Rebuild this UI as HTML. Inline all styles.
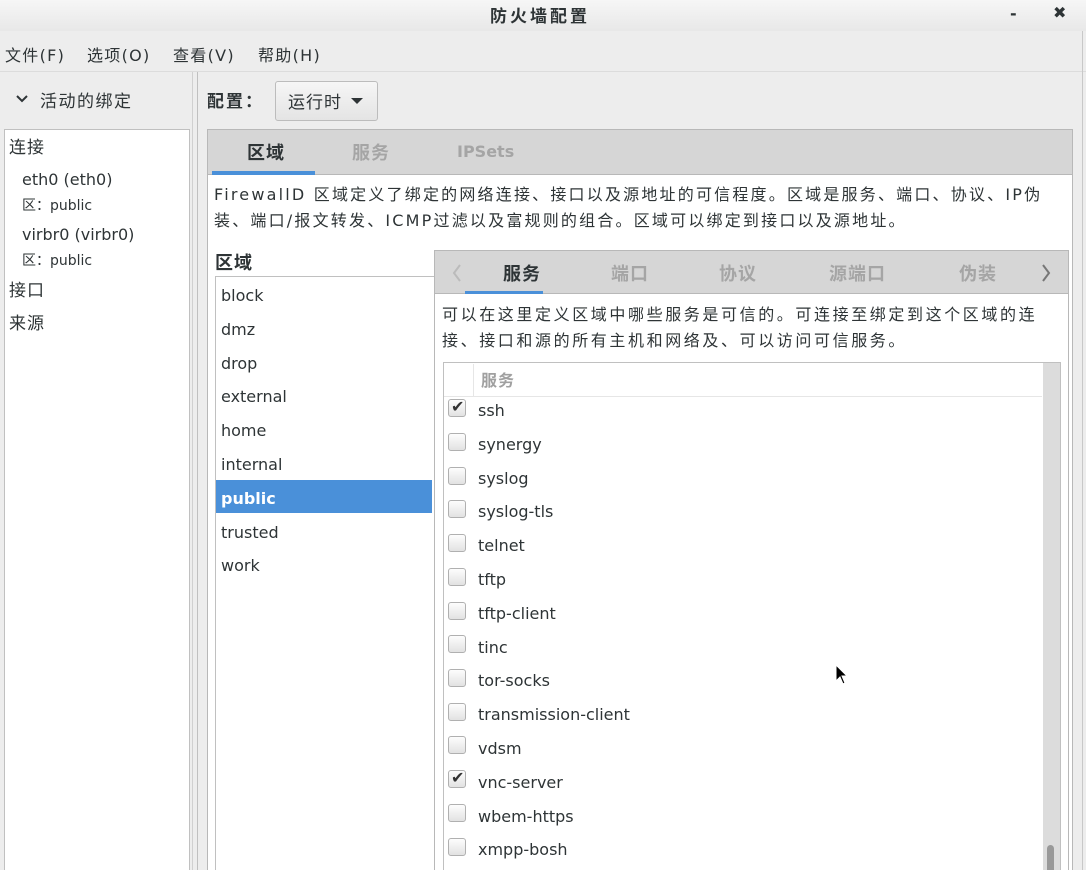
<!DOCTYPE html>
<html><head><meta charset="utf-8"><style>
*{box-sizing:border-box;margin:0;padding:0}
html,body{width:1086px;height:870px;overflow:hidden}
body{background:#ededed;font-family:"DejaVu Sans","Noto Sans CJK SC",sans-serif;font-size:16px;color:#2e3436;position:relative}
.a{position:absolute;white-space:nowrap}
.b{font-weight:bold}
.cb{position:absolute;left:448px;width:18px;height:18px;border:1px solid #b0b0b0;border-radius:3px;background:linear-gradient(#fdfdfd,#e2e2e2)}
.ck::after{content:"✔";position:absolute;left:2px;top:-3px;font-size:16px;color:#333}
</style></head><body>
<div class="a" style="left:0;top:0;width:1086px;height:31px;background:linear-gradient(#f6f6f6,#e8e8e8)"></div>
<div class="a b" style="left:490px;top:2px;font-size:17px;letter-spacing:3px">防火墙配置</div>
<div class="a b" style="left:1010px;top:4px;font-size:16px">-</div>
<div class="a b" style="left:1053px;top:3px;font-size:16px">✖</div>
<div class="a" style="left:5px;top:42px;font-size:16px;letter-spacing:1.3px">文件(F)</div>
<div class="a" style="left:87px;top:42px;font-size:16px;letter-spacing:1.3px">选项(O)</div>
<div class="a" style="left:173px;top:42px;font-size:16px;letter-spacing:1.3px">查看(V)</div>
<div class="a" style="left:258px;top:42px;font-size:16px;letter-spacing:1.3px">帮助(H)</div>
<div class="a" style="left:0;top:71px;width:1086px;height:1px;background:#dcdcdc"></div>
<svg class="a" style="left:15px;top:94px" width="14" height="10"><path d="M2 2 L7 7 L12 2" stroke="#2e3436" stroke-width="2" fill="none"/></svg>
<div class="a" style="left:40px;top:87px;font-size:17px;letter-spacing:1.5px">活动的绑定</div>
<div class="a" style="left:4px;top:129px;width:186px;height:745px;background:#fff;border:1px solid #c0c0c0"></div>
<div class="a" style="left:9px;top:133px;font-size:17px;letter-spacing:1px">连接</div>
<div class="a" style="left:22px;top:170px">eth0 (eth0)</div>
<div class="a" style="left:22px;top:195px;font-size:14px">区：public</div>
<div class="a" style="left:22px;top:225px">virbr0 (virbr0)</div>
<div class="a" style="left:22px;top:250px;font-size:14px">区：public</div>
<div class="a" style="left:9px;top:276px;font-size:17px;letter-spacing:1px">接口</div>
<div class="a" style="left:9px;top:309px;font-size:17px;letter-spacing:1px">来源</div>
<div class="a" style="left:192px;top:72px;width:1px;height:800px;background:#d0d0d0"></div>
<div class="a" style="left:197px;top:72px;width:1px;height:800px;background:#c0c0c0"></div>
<div class="a b" style="left:207px;top:87px;font-size:17px;letter-spacing:2px">配置：</div>
<div class="a" style="left:275px;top:81px;width:103px;height:40px;border:1px solid #bcbcbc;border-radius:3px;background:linear-gradient(#f6f6f6,#e4e4e4)"></div>
<div class="a" style="left:288px;top:88px;font-size:17px;letter-spacing:1px">运行时</div>
<svg class="a" style="left:350px;top:97px" width="14" height="8"><path d="M1 1 L13 1 L7 7 Z" fill="#2e3436"/></svg>
<div class="a" style="left:207px;top:129px;width:866px;height:745px;background:#fff;border:1px solid #b8b8b8"></div>
<div class="a" style="left:208px;top:130px;width:864px;height:45px;background:#d6d6d6;border-bottom:1px solid #b8b8b8"></div>
<div class="a" style="left:212px;top:171px;width:103px;height:4px;background:#4a90d9"></div>
<div class="a b" style="left:247px;top:139px;font-size:18px;letter-spacing:1px">区域</div>
<div class="a b" style="left:352px;top:139px;font-size:18px;color:#a5a5a5;letter-spacing:1px">服务</div>
<div class="a b" style="left:457px;top:142px;font-size:16px;color:#a5a5a5">IPSets</div>
<div class="a" style="left:214px;top:182px;font-size:16px;line-height:26px;letter-spacing:2.2px">FirewallD 区域定义了绑定的网络连接、接口以及源地址的可信程度。区域是服务、端口、协议、IP伪<br>装、端口/报文转发、ICMP过滤以及富规则的组合。区域可以绑定到接口以及源地址。</div>
<div class="a b" style="left:215px;top:249px;font-size:18px;letter-spacing:1px">区域</div>
<div class="a" style="left:215px;top:276px;width:220px;height:600px;background:#fff;border:1px solid #c0c0c0"></div>
<div class="a" style="left:216px;top:480px;width:216px;height:33px;background:#4a90d9"></div>
<div class="a" style="left:221px;top:279px;line-height:33.8px;font-size:16px">block<br>dmz<br>drop<br>external<br>home<br>internal<br><span style="color:#fff;font-weight:bold">public</span><br>trusted<br>work</div>
<div class="a" style="left:434px;top:250px;width:635px;height:625px;background:#fff;border:1px solid #b8b8b8"></div>
<div class="a" style="left:435px;top:251px;width:633px;height:43px;background:#d6d6d6;border-bottom:1px solid #b8b8b8"></div>
<div class="a" style="left:465px;top:291px;width:78px;height:3px;background:#4a90d9"></div>
<svg class="a" style="left:451px;top:263px" width="12" height="20"><path d="M9 2 L3 10 L9 18" stroke="#bbb" stroke-width="2" fill="none"/></svg>
<svg class="a" style="left:1040px;top:263px" width="12" height="20"><path d="M3 2 L9 10 L3 18" stroke="#777" stroke-width="2" fill="none"/></svg>
<div class="a b" style="left:503px;top:260px;font-size:18px;letter-spacing:1px">服务</div>
<div class="a b" style="left:611px;top:260px;font-size:18px;color:#a5a5a5;letter-spacing:1px">端口</div>
<div class="a b" style="left:719px;top:260px;font-size:18px;color:#a5a5a5;letter-spacing:1px">协议</div>
<div class="a b" style="left:829px;top:260px;font-size:18px;color:#a5a5a5;letter-spacing:1px">源端口</div>
<div class="a b" style="left:959px;top:260px;font-size:18px;color:#a5a5a5;letter-spacing:1px">伪装</div>
<div class="a" style="left:442px;top:302px;font-size:16px;line-height:26px;letter-spacing:2.6px">可以在这里定义区域中哪些服务是可信的。可连接至绑定到这个区域的连<br>接、接口和源的所有主机和网络及、可以访问可信服务。</div>
<div class="a" style="left:443px;top:362px;width:618px;height:515px;background:#fff;border:1px solid #c0c0c0"></div>
<div class="a" style="left:1043px;top:363px;width:17px;height:510px;background:#dcdcdc"></div>
<div class="a" style="left:1047px;top:845px;width:7px;height:30px;background:#999;border-radius:4px"></div>
<div class="a" style="left:444px;top:396px;width:598px;height:1px;background:#e6e6e6"></div>
<div class="a" style="left:473px;top:364px;width:1px;height:32px;background:#e6e6e6"></div>
<div class="a b" style="left:481px;top:367px;font-size:16px;color:#a0a0a0;letter-spacing:1px">服务</div>
<div class="a" style="left:478px;top:394px;line-height:33.8px;font-size:16px">ssh<br>synergy<br>syslog<br>syslog-tls<br>telnet<br>tftp<br>tftp-client<br>tinc<br>tor-socks<br>transmission-client<br>vdsm<br>vnc-server<br>wbem-https<br>xmpp-bosh</div>
<div class="cb ck" style="top:399px"></div>
<div class="cb" style="top:433px"></div>
<div class="cb" style="top:467px"></div>
<div class="cb" style="top:500px"></div>
<div class="cb" style="top:534px"></div>
<div class="cb" style="top:568px"></div>
<div class="cb" style="top:602px"></div>
<div class="cb" style="top:635px"></div>
<div class="cb" style="top:669px"></div>
<div class="cb" style="top:703px"></div>
<div class="cb" style="top:736px"></div>
<div class="cb ck" style="top:770px"></div>
<div class="cb" style="top:804px"></div>
<div class="cb" style="top:838px"></div>
<div class="a" style="left:1082px;top:31px;width:1px;height:840px;background:#c8c8c8"></div>
<svg class="a" style="left:835px;top:664px" width="14" height="22"><path d="M1 1 L1 17 L5 13 L8 20 L10 19 L7 12 L12 12 Z" fill="#000" stroke="#fff" stroke-width="1"/></svg>
</body></html>
